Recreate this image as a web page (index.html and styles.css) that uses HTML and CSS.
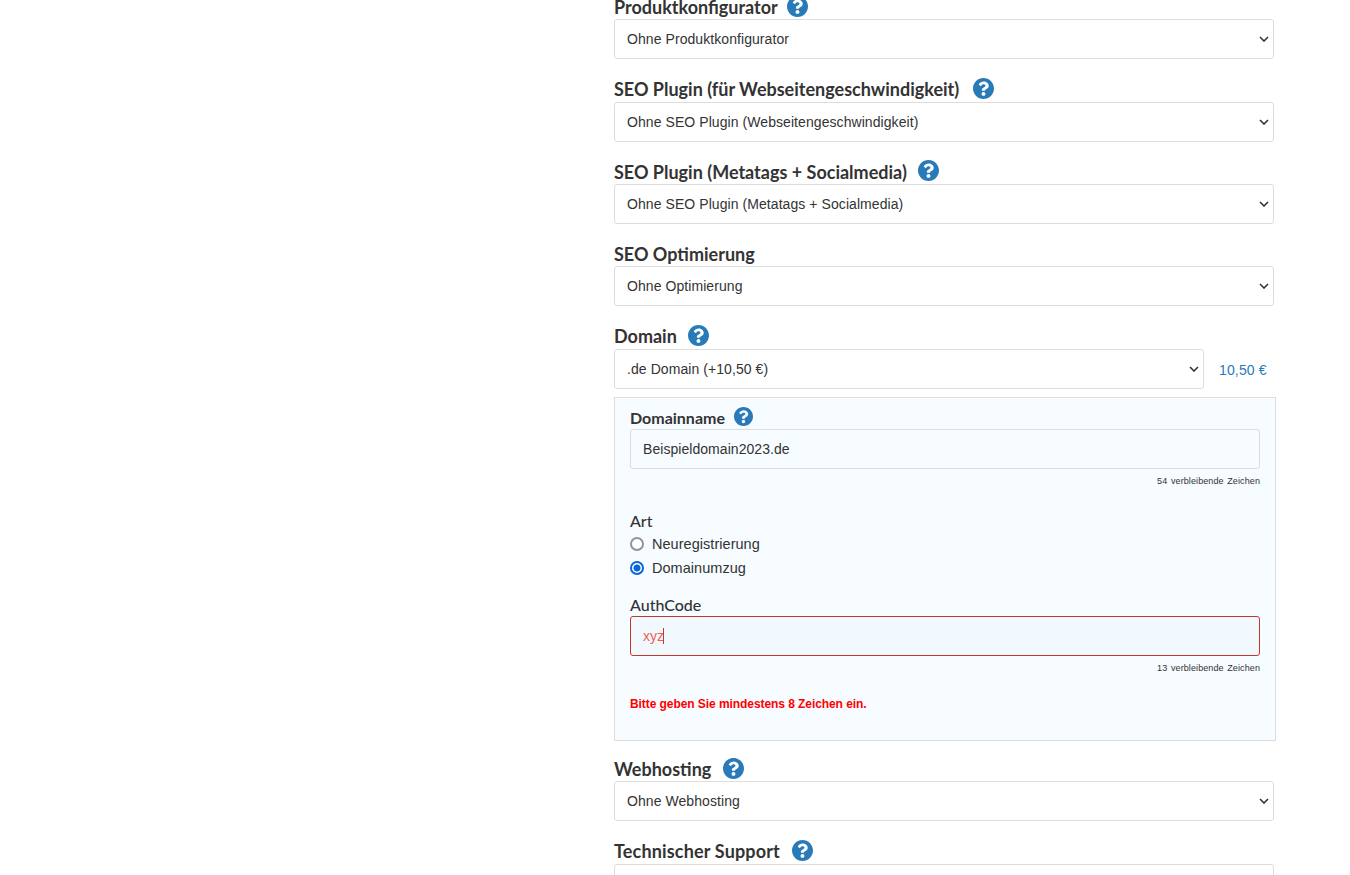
FILE: index.html
```html
<!DOCTYPE html>
<html lang="de">
<head>
<meta charset="utf-8">
<title>Konfigurator</title>
<link rel="stylesheet" href="styles.css">
</head>
<body>
<svg class="defs" width="0" height="0" aria-hidden="true">
  <symbol id="help" viewBox="8 8 496 496">
    <path d="M504 256c0 136.997-111.043 248-248 248S8 392.997 8 256C8 119.083 119.043 8 256 8s248 111.083 248 248zM262.655 90c-54.497 0-89.255 22.957-116.549 63.758-3.536 5.286-2.353 12.415 2.715 16.258l34.699 26.31c5.205 3.947 12.621 3.008 16.665-2.122 17.864-22.658 30.113-35.797 57.303-35.797 20.429 0 45.698 13.148 45.698 32.958 0 14.976-12.363 22.667-32.534 33.976C247.128 238.528 216 254.941 216 296v4c0 6.627 5.373 12 12 12h56c6.627 0 12-5.373 12-12v-1.333c0-28.462 83.186-29.647 83.186-106.667 0-58.002-60.165-102-116.531-102zM256 338c-25.365 0-46 20.635-46 46 0 25.364 20.635 46 46 46s46-20.636 46-46c0-25.365-20.635-46-46-46z"/>
  </symbol>
</svg>
<main class="form">
  <div class="group">
    <label class="label">Produktkonfigurator <svg class="help help-near"><use href="#help"/></svg></label>
    <select class="select"><option>Ohne Produktkonfigurator</option></select>
  </div>
  <div class="group">
    <label class="label">SEO Plugin (für Webseitengeschwindigkeit) <svg class="help help-far"><use href="#help"/></svg></label>
    <select class="select"><option>Ohne SEO Plugin (Webseitengeschwindigkeit)</option></select>
  </div>
  <div class="group">
    <label class="label">SEO Plugin (Metatags + Socialmedia) <svg class="help"><use href="#help"/></svg></label>
    <select class="select"><option>Ohne SEO Plugin (Metatags + Socialmedia)</option></select>
  </div>
  <div class="group">
    <label class="label">SEO Optimierung</label>
    <select class="select"><option>Ohne Optimierung</option></select>
  </div>
  <div class="group group-domain">
    <label class="label">Domain <svg class="help"><use href="#help"/></svg></label>
    <div class="select-row">
      <select class="select select-short"><option>.de Domain (+10,50 €)</option></select>
      <span class="price">10,50 €</span>
    </div>
  </div>
  <section class="panel">
    <label class="sublabel">Domainname <svg class="help help-small"><use href="#help"/></svg></label>
    <input class="input" type="text" value="Beispieldomain2023.de">
    <p class="counter"><span>54</span> <span>verbleibende Zeichen</span></p>
    <div class="art">
      <div class="sublabel sublabel-light">Art</div>
      <label class="radio"><input type="radio" name="art"> Neuregistrierung</label>
      <label class="radio"><input type="radio" name="art" checked> Domainumzug</label>
    </div>
    <label class="sublabel sublabel-light auth-label">AuthCode</label>
    <div class="input-wrap">
      <input class="input input-error" type="text" value="xyz">
      <span class="caret"></span>
    </div>
    <p class="counter"><span>13</span> <span>verbleibende Zeichen</span></p>
    <p class="error">Bitte geben Sie mindestens 8 Zeichen ein.</p>
  </section>
  <div class="group">
    <label class="label">Webhosting <svg class="help"><use href="#help"/></svg></label>
    <select class="select"><option>Ohne Webhosting</option></select>
  </div>
  <div class="group">
    <label class="label label-wide">Technischer Support <svg class="help"><use href="#help"/></svg></label>
    <select class="select"><option>Ohne Support</option></select>
  </div>
</main>
</body>
</html>
```

FILE: styles.css
```css
* { box-sizing: border-box; }
html, body { margin: 0; height: 875px; overflow: hidden; background: #fff; }
body { font-family: "Liberation Sans", Arial, sans-serif; font-size: 14px; color: #333; }
.defs { position: absolute; }
.form { width: 662px; margin: -5px 0 0 614px; }
.group { margin-bottom: 18px; }
.group-domain { margin-bottom: 8px; }
.label {
  display: flex; align-items: center; height: 24.33px;
  font-family: Lato, sans-serif; font-weight: 700; font-size: 18px; color: #333;
  white-space: pre;
}
.label-wide { letter-spacing: 0.16px; }
.help { width: 21px; height: 21px; fill: #287ab8; margin: 0 0 2px 7px; flex: none; }
.help-near { margin-left: 5px; }
.help-far { margin-left: 9px; }
.help-small { width: 19px; height: 19px; margin: 0 0 3px 5px; }
.select {
  display: block; width: 660px; height: 40px; padding: 0 8px 0 12px;
  appearance: none;
  font: 14px "Liberation Sans", Arial, sans-serif; letter-spacing: 0.07px; color: #333;
  background: #fff url("data:image/svg+xml,%3Csvg xmlns='http://www.w3.org/2000/svg' width='10' height='6' viewBox='0 0 10 6'%3E%3Cpath d='M1 1l4 4 4-4' fill='none' stroke='%23333' stroke-width='1.6'/%3E%3C/svg%3E") no-repeat right 4px center;
  border: 1px solid #ddd; border-radius: 3px;
}
.select-row { display: flex; align-items: center; gap: 15px; }
.select-short { width: 590px; }
.price { color: #287ab8; font-size: 14px; letter-spacing: 0.15px; position: relative; top: 1px; }
.panel {
  height: 344px; margin-bottom: 16.3px; padding: 7px 15px 0;
  background: #f6fcff; border: 1px solid #ddd;
}
.sublabel {
  display: flex; align-items: center; height: 24px; padding-top: 2px;
  font-family: Lato, sans-serif; font-weight: 700; font-size: 16px; color: #333; white-space: pre;
}
.sublabel-light { font-weight: 500; }
.input {
  display: block; width: 100%; height: 40px; padding: 0 12px;
  font: 14px "Liberation Sans", Arial, sans-serif; letter-spacing: 0.05px; color: #333;
  background: #f6fcff; border: 1px solid #ddd; border-radius: 3px; outline: 0;
}
.counter { margin: 7px 0 0; height: 10px; text-align: right; font-size: 9px; line-height: 10px; letter-spacing: 0.1px; color: #333; word-spacing: 1px; }
.art { margin-top: 22px; }
.radio { display: flex; align-items: center; height: 24px; gap: 8px; font-size: 14.5px; letter-spacing: 0.04px; }
.radio input {
  appearance: none; margin: 0; width: 14px; height: 14px;
  border: 2px solid #90949c; border-radius: 50%; background: #fff;
}
.radio input:checked { border-color: #0a66d8; background: radial-gradient(circle, #0a66d8 0 3.2px, #fff 3.9px); }
.auth-label { margin-top: 12px; }
.input-wrap { position: relative; }
.input-error { background: #f2f9fe; border-color: #c0392b; color: #ee5f58; }
.caret { position: absolute; left: 33px; top: 12px; width: 1px; height: 16px; background: #c0392b; }
.error { margin: 24px 0 0; font-size: 12px; line-height: 14px; font-weight: 700; letter-spacing: -0.07px; color: #f00; }
```
